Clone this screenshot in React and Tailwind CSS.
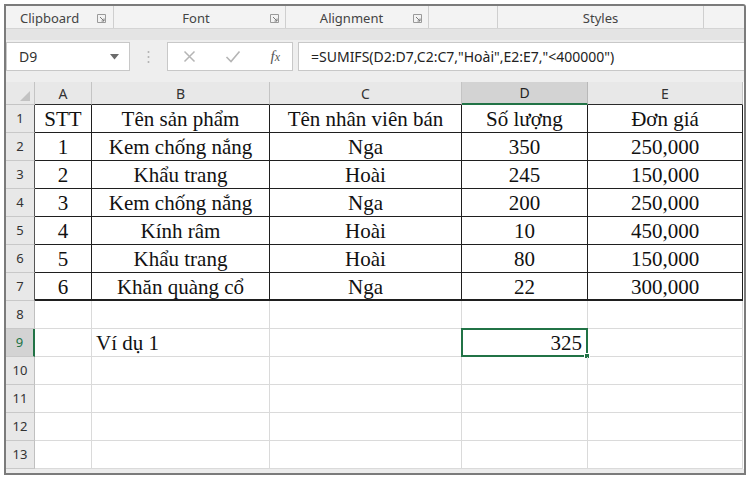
import React from "react";

const ui = { fontFamily: '"Noto Sans", "Open Sans", Arial, sans-serif' };
const serif = { fontFamily: '"Liberation Serif", "Times New Roman", serif' };

const cols = ["A", "B", "C", "D", "E"];
const data = [
  ["STT", "Tên sản phẩm", "Tên nhân viên bán", "Số lượng", "Đơn giá"],
  ["1", "Kem chống nắng", "Nga", "350", "250,000"],
  ["2", "Khẩu trang", "Hoài", "245", "150,000"],
  ["3", "Kem chống nắng", "Nga", "200", "250,000"],
  ["4", "Kính râm", "Hoài", "10", "450,000"],
  ["5", "Khẩu trang", "Hoài", "80", "150,000"],
  ["6", "Khăn quàng cổ", "Nga", "22", "300,000"],
];

function Launcher() {
  return (
    <svg width="9" height="9" viewBox="0 0 9 9" className="shrink-0">
      <path d="M0.5 0.5H8.5V8.5H0.5Z" fill="none" stroke="#9a9a9a" strokeWidth="1" />
      <path d="M3 3L7 7M7 4.5V7H4.5" fill="none" stroke="#7a7a7a" strokeWidth="1" />
    </svg>
  );
}

function Divider() {
  return <div className="w-px self-stretch bg-[#cfcfcf]" />;
}

export default function App() {
  return (
    <div className="w-[750px] h-[478px] bg-white pt-[4px] pl-[4px]" style={ui}>
      <div className="w-[742px] h-[471px] border-2 border-[#7b7b7b] rounded-tr-[3px] bg-[#ececec] flex flex-col overflow-hidden">
        {/* Ribbon group labels */}
        <div className="h-[23px] bg-[#f3f3f3] flex items-stretch text-[13px] text-[#444] border-b border-[#d4d4d4]">
          <div className="w-[107px] flex items-center justify-between pl-[14px] pr-[7px] pt-[3px]">
            <span>Clipboard</span>
            <Launcher />
          </div>
          <Divider />
          <div className="w-[171px] flex items-center pr-[6px] pt-[3px]">
            <span className="flex-1 text-center pl-[8px]">Font</span>
            <Launcher />
          </div>
          <Divider />
          <div className="w-[142px] flex items-center pr-[6px] pt-[3px]">
            <span className="flex-1 text-center pl-[4px]">Alignment</span>
            <Launcher />
          </div>
          <Divider />
          <div className="w-[68px]" />
          <Divider />
          <div className="w-[205px] flex items-center justify-center pt-[3px]">
            <span>Styles</span>
          </div>
          <Divider />
          <div className="flex-1" />
        </div>
        <div className="h-[11px] bg-[#e4e4e4]" />
        {/* Formula bar */}
        <div className="h-[42px] flex items-start pt-[2px] bg-[#eeeeee]">
          <div className="w-[124px] h-[29px] bg-white border border-[#c8c8c8] flex items-center justify-between pl-[12px] pr-[10px] text-[14px] text-[#333]">
            <span>D9</span>
            <svg width="9" height="6" viewBox="0 0 9 6">
              <path d="M0 0H9L4.5 5.5Z" fill="#6b6b6b" />
            </svg>
          </div>
          <div className="w-[37px] h-[29px] flex items-center justify-center">
            <svg width="3" height="14" viewBox="0 0 3 14">
              <circle cx="1.5" cy="2" r="1" fill="#b0b0b0" />
              <circle cx="1.5" cy="7" r="1" fill="#b0b0b0" />
              <circle cx="1.5" cy="12" r="1" fill="#b0b0b0" />
            </svg>
          </div>
          <div className="w-[126px] h-[29px] bg-white border border-[#c8c8c8] flex items-center pl-[15px] pr-[12px] justify-between">
            <svg width="13" height="13" viewBox="0 0 13 13">
              <path d="M1.5 1.5L11.5 11.5M11.5 1.5L1.5 11.5" stroke="#b5b5b5" strokeWidth="1.5" />
            </svg>
            <svg width="16" height="13" viewBox="0 0 16 13">
              <path d="M1.5 7L6 11.5L14.5 1.5" fill="none" stroke="#b5b5b5" strokeWidth="1.6" />
            </svg>
            <span className="text-[15px] italic text-[#555]" style={serif}>
              f<span className="text-[12px]">x</span>
            </span>
          </div>
          <div className="flex-1 h-[29px] ml-[5px] bg-white border-y border-l border-[#c8c8c8] flex items-center pl-[12px] text-[14px] text-[#222]">
            =SUMIFS(D2:D7,C2:C7,"Hoài",E2:E7,"&lt;400000")
          </div>
        </div>
        {/* Grid */}
        <div className="grid grid-cols-[29px_57px_178px_192px_126px_155px] bg-white">
          {/* header row */}
          <div className="h-[23px] bg-[#e8e8e8] border-r border-b border-[#c4c4c4] flex items-end justify-end pr-[4px] pb-[3px]">
            <svg width="10" height="10" viewBox="0 0 10 10">
              <path d="M10 0V10H0Z" fill="#c2c2c2" />
            </svg>
          </div>
          {cols.map((c) => (
            <div
              key={c}
              className={
                c === "D"
                  ? "h-[23px] bg-[#d3d3d3] border-r border-[#b8b8b8] border-b-2 border-b-[#217346] flex items-center justify-center text-[14px] text-[#222]"
                  : "h-[23px] bg-[#e8e8e8] border-r border-[#c4c4c4] border-b border-b-[#2a2a2a] flex items-center justify-center text-[14px] text-[#333]"
              }
            >
              {c}
            </div>
          ))}
          {/* data rows */}
          {data.map((row, ri) => (
            <React.Fragment key={ri}>
              <div className="h-[28px] bg-[#e8e8e8] border-r border-r-[#555] border-b border-b-[#c8c8c8] flex items-center justify-center text-[13px] text-[#333]">
                {ri + 1}
              </div>
              {row.map((cell, ci) => (
                <div
                  key={ci}
                  className={
                    (ri === 6 ? "border-b-2 " : "border-b ") +
                    "h-[28px] border-r border-[#1f1f1f] flex items-center justify-center pt-[2px] text-[21px] text-[#111] leading-none whitespace-nowrap"
                  }
                  style={serif}
                >
                  {cell}
                </div>
              ))}
            </React.Fragment>
          ))}
          {/* empty rows */}
          {[8, 9, 10, 11, 12, 13].map((n) => (
            <React.Fragment key={n}>
              <div
                className={
                  n === 9
                    ? "h-[28px] bg-[#d3d3d3] border-r-2 border-r-[#217346] border-b border-b-[#c8c8c8] flex items-center justify-center text-[13px] text-[#217346]"
                    : "h-[28px] bg-[#e8e8e8] border-r border-r-[#c0c0c0] border-b border-b-[#c8c8c8] flex items-center justify-center text-[13px] text-[#333]"
                }
              >
                {n}
              </div>
              <div className="h-[28px] border-r border-b border-[#dadada]" />
              <div className="h-[28px] border-r border-b border-[#dadada] flex items-center pl-[4px] pt-[2px] text-[21px] text-[#111] whitespace-nowrap leading-none" style={serif}>
                {n === 9 ? "Ví dụ 1" : ""}
              </div>
              <div className="h-[28px] border-r border-b border-[#dadada]" />
              <div className="relative h-[28px] border-r border-b border-[#dadada] flex items-center justify-end pr-[5px] pt-[2px] text-[21px] text-[#111] leading-none" style={serif}>
                {n === 9 && (
                  <>
                    325
                    <div className="absolute -left-[1px] -top-[1px] -right-[1px] -bottom-[1px] border-2 border-[#217346]" />
                    <div className="absolute -right-[3px] -bottom-[3px] w-[6px] h-[6px] bg-[#217346] border border-white" />
                  </>
                )}
              </div>
              <div className="h-[28px] border-r border-b border-[#dadada]" />
            </React.Fragment>
          ))}
        </div>
      </div>
    </div>
  );
}
